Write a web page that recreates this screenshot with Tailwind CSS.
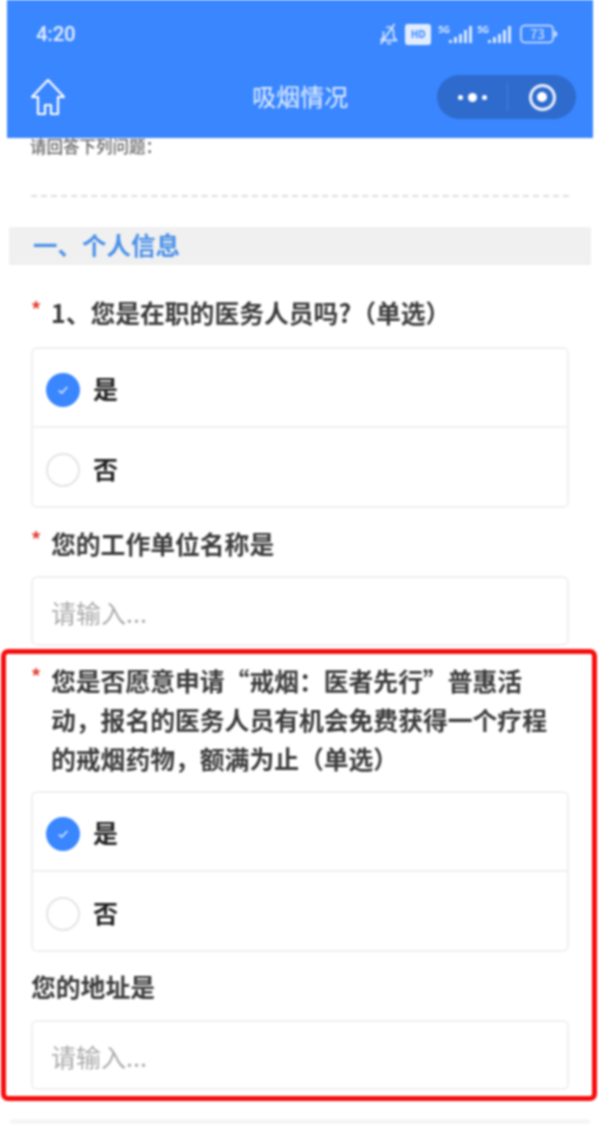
<!DOCTYPE html>
<html lang="zh-CN">

<head>
    <meta charset="UTF-8">
    <meta name="viewport" content="width=device-width, initial-scale=1.0">
    <title>吸烟情况</title>
    <script src="https://cdn.jsdelivr.net/npm/@tailwindcss/browser@4"></script>
</head>

<body class="bg-white overflow-hidden">
    <div class="relative w-[600px] h-[1126px] overflow-hidden blur-[0.8px] font-['Noto_Sans_CJK_SC',sans-serif] text-[#3a3a3a]">
        <!-- 顶部导航 -->
        <header class="relative z-10 mx-[7px] h-[138px] bg-[#3a86ff] text-white">
            <div class="h-[68px] flex items-center justify-between pl-[29px] pr-[35px]">
                <span class="text-[20px] font-['Roboto',sans-serif] font-medium text-white/85">4:20</span>
                <div class="flex items-center gap-[4px] text-white/80">
                    <svg class="w-[22px] h-[26px] mr-[1px]" viewBox="0 0 24 26" fill="none" stroke="currentColor" stroke-width="1.800">
                        <path d="M3 20h17l-3-4v-5a5.500 5.500 0 0 0-8-5M6 10v6l-3 4M3 24L18 2M10 22.500a2.500 2.500 0 0 0 4 0" />
                    </svg>
                    <div class="w-[26px] h-[21px] rounded-[3px] bg-white/85 flex items-center justify-center text-[10px] font-bold leading-none text-[#3a86ff] mr-[3px]">HD</div>
                    <svg class="w-[35px] h-[22px]" viewBox="0 0 35 22" fill="currentColor">
                        <text x="0" y="10" font-size="9" font-weight="700">5G</text>
                        <rect x="11" y="17" width="3" height="3" />
                        <rect x="16" y="14" width="3" height="6" />
                        <rect x="21" y="11" width="3" height="9" />
                        <rect x="26" y="7" width="3" height="13" />
                        <rect x="31" y="3" width="3" height="17" />
                    </svg>
                    <svg class="w-[35px] h-[22px] mr-[4px]" viewBox="0 0 35 22" fill="currentColor">
                        <text x="0" y="10" font-size="9" font-weight="700">5G</text>
                        <rect x="11" y="17" width="3" height="3" />
                        <rect x="16" y="14" width="3" height="6" />
                        <rect x="21" y="11" width="3" height="9" />
                        <rect x="26" y="7" width="3" height="13" />
                        <rect x="31" y="3" width="3" height="17" />
                    </svg>
                    <svg class="w-[38px] h-[20px]" viewBox="0 0 38 20" fill="none" stroke="currentColor">
                        <rect x="1" y="1.500" width="32" height="17" rx="4" stroke-width="1.600" />
                        <path d="M35 7v6l2-3z" fill="currentColor" stroke-width="1" />
                        <text x="10" y="15" font-size="13" fill="currentColor" stroke="none">73</text>
                    </svg>
                </div>
            </div>
            <div class="relative h-[58px] flex items-center justify-between pl-[23px] pr-[17px]">
                <svg class="w-[36px] h-[40px]" viewBox="0 0 36 40" fill="none" stroke="currentColor" stroke-width="2.200" stroke-linejoin="round">
                    <path d="M18 3L2 20h6v17h7v-9h6v9h7V20h6z" />
                </svg>
                <span class="absolute left-[245px] top-[8px] text-[24px] leading-[40px] text-white/85">吸烟情况</span>
                <div class="w-[139px] h-[44px] rounded-full bg-[#2e6bcd] flex items-center">
                    <div class="w-[70px] flex items-center justify-center gap-[5px]">
                        <span class="w-[5px] h-[5px] rounded-full bg-white"></span>
                        <span class="w-[9px] h-[9px] rounded-full bg-white"></span>
                        <span class="w-[5px] h-[5px] rounded-full bg-white"></span>
                    </div>
                    <div class="w-px h-[28px] bg-white/15"></div>
                    <div class="flex-1 flex items-center justify-center">
                        <div class="w-[27px] h-[27px] rounded-full border-[3px] border-white/90 flex items-center justify-center">
                            <span class="w-[10px] h-[10px] rounded-full bg-white"></span>
                        </div>
                    </div>
                </div>
            </div>
        </header>

        <main>
            <p class="mt-[-2px] ml-[30px] text-[16.500px] leading-[20px] font-medium text-[#666]">请回答下列问题：</p>
            <div class="mt-[39px] mx-[31px] border-t-2 border-dashed border-[#ddd]"></div>
            <h2 class="mt-[30px] mx-[9px] h-[38px] bg-[#f0f0f0] pl-[24px] text-[24.500px] leading-[36px] font-bold text-[#4a90e8]">一、个人信息</h2>

            <!-- 问题 1 -->
            <div class="mt-[29px] mx-[31px] flex text-[24.800px] leading-[39px] font-bold">
                <span class="w-[20px] shrink-0 text-[20px] leading-[30px] font-bold text-[#e53a2e]">*</span>
                <p class="-mt-[1px] mb-[1px]">1、您是在职的医务人员吗?（单选）</p>
            </div>
            <div class="mt-[14px] mx-[31px] h-[161px] rounded-[6px] border-2 border-[#f0f0f0] flex flex-col divide-y-2 divide-[#f0f0f0] text-[25px] font-bold text-[#222]">
                <div class="h-[79px] flex items-center pl-[13px] pt-[5px] gap-[13px]">
                    <span class="w-[34px] h-[34px] rounded-full bg-[#3a86ff] flex items-center justify-center">
                        <svg class="w-[12px] h-[12px]" viewBox="0 0 14 14" fill="none" stroke="#cfe2ff" stroke-width="2"><path d="M2 7.500l3.500 3L12 3.500" /></svg>
                    </span>
                    <span class="-mt-[2px]">是</span>
                </div>
                <div class="flex-1 flex items-center pl-[13px] pt-[5px] gap-[13px]">
                    <span class="w-[34px] h-[34px] rounded-full border-2 border-[#e4e4e4]"></span>
                    <span class="-mt-[2px]">否</span>
                </div>
            </div>

            <div class="mt-[16px] mx-[31px] flex text-[24.800px] leading-[39px] font-bold">
                <span class="w-[20px] shrink-0 text-[20px] leading-[30px] font-bold text-[#e53a2e]">*</span>
                <p>您的工作单位名称是</p>
            </div>
            <div class="mt-[13px] mx-[31px] h-[70px] rounded-[6px] border-2 border-[#f0f0f0] pl-[18px] pt-[3px] flex items-center text-[25px] text-[#aaa]">请输入...</div>

            <!-- 问题 2 -->
            <div class="mt-[15px] mx-[31px] flex text-[24.800px] leading-[39px] font-bold">
                <span class="w-[20px] shrink-0 text-[20px] leading-[30px] font-bold text-[#e53a2e]">*</span>
                <p class="whitespace-nowrap">您是否愿意申请“戒烟：医者先行”普惠活<br>动，报名的医务人员有机会免费获得一个疗程<br>的戒烟药物，额满为止（单选）</p>
            </div>
            <div class="mt-[13px] mx-[31px] h-[161px] rounded-[6px] border-2 border-[#f0f0f0] flex flex-col divide-y-2 divide-[#f0f0f0] text-[25px] font-bold text-[#222]">
                <div class="h-[79px] flex items-center pl-[13px] pt-[5px] gap-[13px]">
                    <span class="w-[34px] h-[34px] rounded-full bg-[#3a86ff] flex items-center justify-center">
                        <svg class="w-[12px] h-[12px]" viewBox="0 0 14 14" fill="none" stroke="#cfe2ff" stroke-width="2"><path d="M2 7.500l3.500 3L12 3.500" /></svg>
                    </span>
                    <span class="-mt-[2px]">是</span>
                </div>
                <div class="flex-1 flex items-center pl-[13px] pt-[5px] gap-[13px]">
                    <span class="w-[34px] h-[34px] rounded-full border-2 border-[#e4e4e4]"></span>
                    <span class="-mt-[2px]">否</span>
                </div>
            </div>

            <p class="mt-[15px] mx-[31px] text-[24.800px] leading-[39px] font-bold">您的地址是</p>
            <div class="mt-[14px] mx-[31px] h-[70px] rounded-[6px] border-2 border-[#f0f0f0] pl-[18px] pt-[3px] flex items-center text-[25px] text-[#aaa]">请输入...</div>

            <div class="mt-[30px] mx-[10px] h-[3px] border-y border-[#e8e8e8]"></div>
        </main>

        <!-- 红色标注框 -->
        <div class="absolute left-[1px] top-[649px] w-[596px] h-[452px] rounded-[7px] border-[5px] border-[#f60d0d]"></div>
    </div>
</body>

</html>
